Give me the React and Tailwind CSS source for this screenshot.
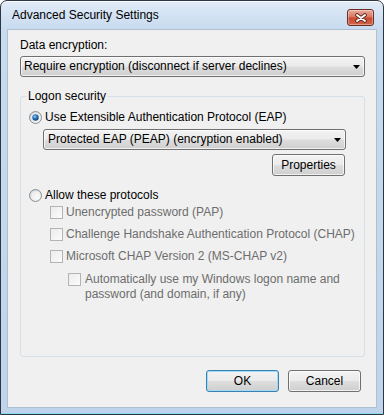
import React from 'react';

const btnBg =
  'bg-[linear-gradient(180deg,#f3f3f3_0%,#ebebeb_48%,#dddddd_52%,#cfcfcf_100%)]';

const Radio = ({ id, checked }) => (
  <svg width="13" height="13" viewBox="0 0 13 13" className="shrink-0">
    <defs>
      <linearGradient id={`rb-${id}`} x1="0" y1="0" x2="1" y2="1">
        <stop offset="0" stopColor="#cfd1d3" />
        <stop offset="1" stopColor="#f7f7f7" />
      </linearGradient>
      <linearGradient id={`ri-${id}`} x1="0" y1="0" x2="1" y2="1">
        <stop offset="0" stopColor="#e9e9e9" />
        <stop offset="1" stopColor="#fdfdfd" />
      </linearGradient>
      <radialGradient id={`rd-${id}`} cx="0.4" cy="0.35" r="0.7">
        <stop offset="0" stopColor="#8fd0f7" />
        <stop offset="0.45" stopColor="#2b78c0" />
        <stop offset="1" stopColor="#0b3a6c" />
      </radialGradient>
    </defs>
    <circle cx="6.5" cy="6.5" r="6" fill={`url(#rb-${id})`} stroke="#8b8e91" />
    <circle cx="6.5" cy="6.5" r="4.3" fill={`url(#ri-${id})`} />
    {checked && <circle cx="6.5" cy="6.5" r="3.2" fill={`url(#rd-${id})`} />}
  </svg>
);

const Check = () => (
  <span className="shrink-0 w-[13px] h-[13px] border border-[#b4b4b4] bg-[linear-gradient(135deg,#ececec,#fbfbfb)]" />
);

const Combo = ({ text, className }) => (
  <div
    className={`h-[21px] flex items-center justify-between pl-[3px] pr-[4px] border border-[#707070] rounded-[3px] ${btnBg} shadow-[inset_0_0_0_1px_rgba(255,255,255,0.7)] ${className}`}
  >
    <span className="whitespace-nowrap">{text}</span>
    <svg width="7" height="4" viewBox="0 0 7 4">
      <polygon points="0,0 7,0 3.5,4" fill="#000" />
    </svg>
  </div>
);

const Button = ({ children, primary, className = '' }) => (
  <button
    className={`h-[22px] w-[73px] rounded-[3px] border ${btnBg} ${
      primary
        ? 'border-[#3c7fb1] shadow-[inset_0_0_0_1px_#9fdcf5]'
        : 'border-[#707070] shadow-[inset_0_0_0_1px_rgba(255,255,255,0.7)]'
    } ${className}`}
  >
    {children}
  </button>
);

const protocols = [
  'Unencrypted password (PAP)',
  'Challenge Handshake Authentication Protocol (CHAP)',
  'Microsoft CHAP Version 2 (MS-CHAP v2)',
];

export default function App() {
  return (
    <div className="w-[384px] h-[415px] font-['Liberation_Sans','Noto_Sans',sans-serif] text-[12px] leading-[15px] text-black">
      <div className="h-full flex flex-col rounded-t-[7px] border border-[#2d3744] bg-[linear-gradient(180deg,#e0ebf7_0px,#c8dbef_28px,#bfd4eb_100%)] shadow-[inset_0_1px_0_rgba(255,255,255,0.8),inset_0_-1px_0_#86d9f0]">
        <div className="h-[28px] flex items-start justify-between pl-[11px] pr-[9px]">
          <span className="mt-[7px]">Advanced Security Settings</span>
          <div className="mt-[8px] w-[27px] h-[17px] rounded-[3px] border border-[#6e2c24] bg-[linear-gradient(180deg,#e9ad9f_0%,#d7735e_48%,#c8472f_52%,#d0684a_100%)] shadow-[inset_0_0_0_1px_rgba(255,255,255,0.35)] flex items-center justify-center">
            <svg width="14" height="10" viewBox="0 0 14 10">
              <path d="M3 2L11 8M11 2L3 8" stroke="#5a2219" strokeWidth="3.6" strokeLinecap="round" />
              <path d="M3 2L11 8M11 2L3 8" stroke="#fff" strokeWidth="2" strokeLinecap="round" />
            </svg>
          </div>
        </div>

        <div className="flex-1 mx-[6px] mb-[6px] border border-[#aebfd2] bg-[#f0f0f0] flex flex-col pl-[12px] pr-[11px] pt-[8px]">
          <div>Data encryption:</div>
          <Combo className="mt-[3px]" text="Require encryption (disconnect if server declines)" />

          <fieldset className="mt-[12px] h-[268px] border border-[#d5dfe5] rounded-[3px] flex flex-col">
            <legend className="ml-[5px] px-[2px]">Logon security</legend>

            <div className="mt-[6px] pl-[8px] flex items-center gap-[3px]">
              <Radio id="eap" checked />
              <span>Use Extensible Authentication Protocol (EAP)</span>
            </div>

            <div className="ml-[22px] w-[303px] flex flex-col">
              <Combo className="mt-[4px] pl-[4px]" text="Protected EAP (PEAP) (encryption enabled)" />
              <Button className="mt-[4px] self-end mr-[1px]">Properties</Button>
            </div>

            <div className="mt-[12px] pl-[8px] flex items-center gap-[3px]">
              <Radio id="allow" />
              <span>Allow these protocols</span>
            </div>

            <div className="flex flex-col text-[#6d6d6d]">
              {protocols.map((p, i) => (
                <div
                  key={p}
                  className={`${i === 0 ? 'mt-[2px]' : 'mt-[7px]'} ml-[29px] flex items-center gap-[3px]`}
                >
                  <Check />
                  <span>{p}</span>
                </div>
              ))}
              <div className="mt-[8px] ml-[47px] flex items-start gap-[4px]">
                <span className="mt-[1px] flex">
                  <Check />
                </span>
                <span>
                  Automatically use my Windows logon name and
                  <br />
                  password (and domain, if any)
                </span>
              </div>
            </div>
          </fieldset>

          <div className="mt-[13px] mr-[4px] flex justify-end gap-[9px]">
            <Button primary>OK</Button>
            <Button>Cancel</Button>
          </div>
        </div>
      </div>
    </div>
  );
}
